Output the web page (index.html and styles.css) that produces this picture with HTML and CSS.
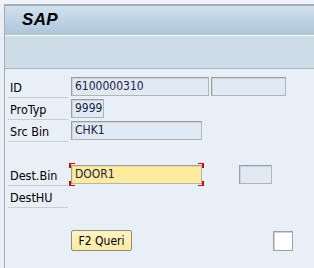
FILE: index.html
```html
<!DOCTYPE html>
<html>
<head>
<meta charset="utf-8">
<link rel="stylesheet" href="styles.css">
</head>
<body>
<div class="topstrip"></div>
<div class="window">
  <div class="titlebar"><span class="title">SAP</span></div>
  <div class="toolbar"></div>
  <div class="content">
    <div class="row">
      <div class="label">ID</div>
      <div class="field w138">6100000310</div>
      <div class="field w75 ml2"></div>
    </div>
    <div class="row">
      <div class="label">ProTyp</div>
      <div class="field w33">9999</div>
    </div>
    <div class="row">
      <div class="label">Src Bin</div>
      <div class="field w131">CHK1</div>
    </div>
    <div class="row gap-top">
      <div class="label">Dest.Bin</div>
      <div class="focus">
        <div class="field w131 active">DOOR1</div>
        <span class="br tl"></span><span class="br bl"></span><span class="br tr"></span><span class="br brr"></span>
      </div>
      <div class="field w33 ml37"></div>
    </div>
    <div class="row">
      <div class="label">DestHU</div>
    </div>
    <div class="btnrow">
      <button class="btn">F2 Queri</button>
      <div class="check"></div>
    </div>
  </div>
</div>
</body>
</html>
```
FILE: styles.css
```css
* { box-sizing: border-box; }
html, body { margin: 0; padding: 0; }
body {
  width: 314px;
  height: 268px;
  overflow: hidden;
  background: #e9eff6;
  font-family: Tahoma, "DejaVu Sans", "Liberation Sans", sans-serif;
}
.topstrip {
  height: 4px;
  background: #eff2f7;
}
.window {
  margin-left: 4px;
  border-top: 2px solid #a3adb9;
  border-left: 1px solid #a3adb9;
  height: 264px;
}
.titlebar {
  height: 30px;
  background: linear-gradient(#d1e1ee, #adc5da);
  border-bottom: 1px solid #ffffff;
  padding-left: 17px;
  display: flex;
  align-items: center;
}
.title {
  font-family: "Liberation Sans", Arial, sans-serif;
  font-weight: bold;
  font-style: italic;
  font-size: 17px;
  color: #000;
  margin-top: -2px;
  letter-spacing: 0.3px;
}
.toolbar {
  height: 33px;
  background: #cedce7;
  border-bottom: 1px solid #a9b5c2;
}
.content {
  padding: 8px 0 0 3px;
}
.row {
  display: flex;
  align-items: flex-start;
  height: 22px;
}
.gap-top { margin-top: 22px; }
.label {
  width: 60px;
  height: 21px;
  margin-right: 3px;
  padding-left: 2px;
  font-family: "DejaVu Sans Condensed", "DejaVu Sans", sans-serif;
  font-size: 12.5px;
  line-height: 21px;
  color: #000;
  border-bottom: 1px solid #c8ced6;
}
.field {
  height: 19px;
  background: #dfeaf4;
  border: 1px solid #9e9e9e;
  border-right-color: #b4b4b4;
  border-bottom-color: #b4b4b4;
  box-shadow: inset 1px 1px 0 #c9d3dc;
  font-family: "DejaVu Sans Condensed", "DejaVu Sans", sans-serif;
  font-size: 12px;
  line-height: 17px;
  padding-left: 3px;
  color: #1a2244;
}
.active {
  background: #feeb9e;
  box-shadow: inset 1px 1px 0 #f3dc8c;
}
.w138 { width: 138px; }
.w131 { width: 131px; }
.w75 { width: 75px; }
.w33 { width: 33px; }
.ml2 { margin-left: 2px; }
.ml37 { margin-left: 37px; }
.focus {
  position: relative;
}
.br {
  position: absolute;
  width: 6px;
  height: 5px;
  border: 0 solid #d40000;
}
.tl { left: -2px; top: -2px; border-left-width: 2px; border-top-width: 1px; }
.bl { left: -2px; bottom: -2px; border-left-width: 2px; border-bottom-width: 1px; }
.tr { right: -2px; top: -2px; border-right-width: 2px; border-top-width: 1px; }
.brr { right: -2px; bottom: -2px; border-right-width: 2px; border-bottom-width: 1px; }
.btnrow {
  display: flex;
  align-items: center;
  margin-top: 21px;
  padding-left: 63px;
}
.btn {
  width: 61px;
  height: 21px;
  padding: 0;
  background: linear-gradient(#fff4c6, #fee9a4);
  border: 1px solid #8d8d78;
  border-radius: 2px;
  font-family: "DejaVu Sans Condensed", "DejaVu Sans", sans-serif;
  font-size: 12px;
  color: #000;
}
.check {
  width: 20px;
  height: 20px;
  margin-left: 141px;
  background: #ffffff;
  border: 1px solid #a0a0a0;
  box-shadow: inset 1px 1px 0 #d0d0d0;
}
```
